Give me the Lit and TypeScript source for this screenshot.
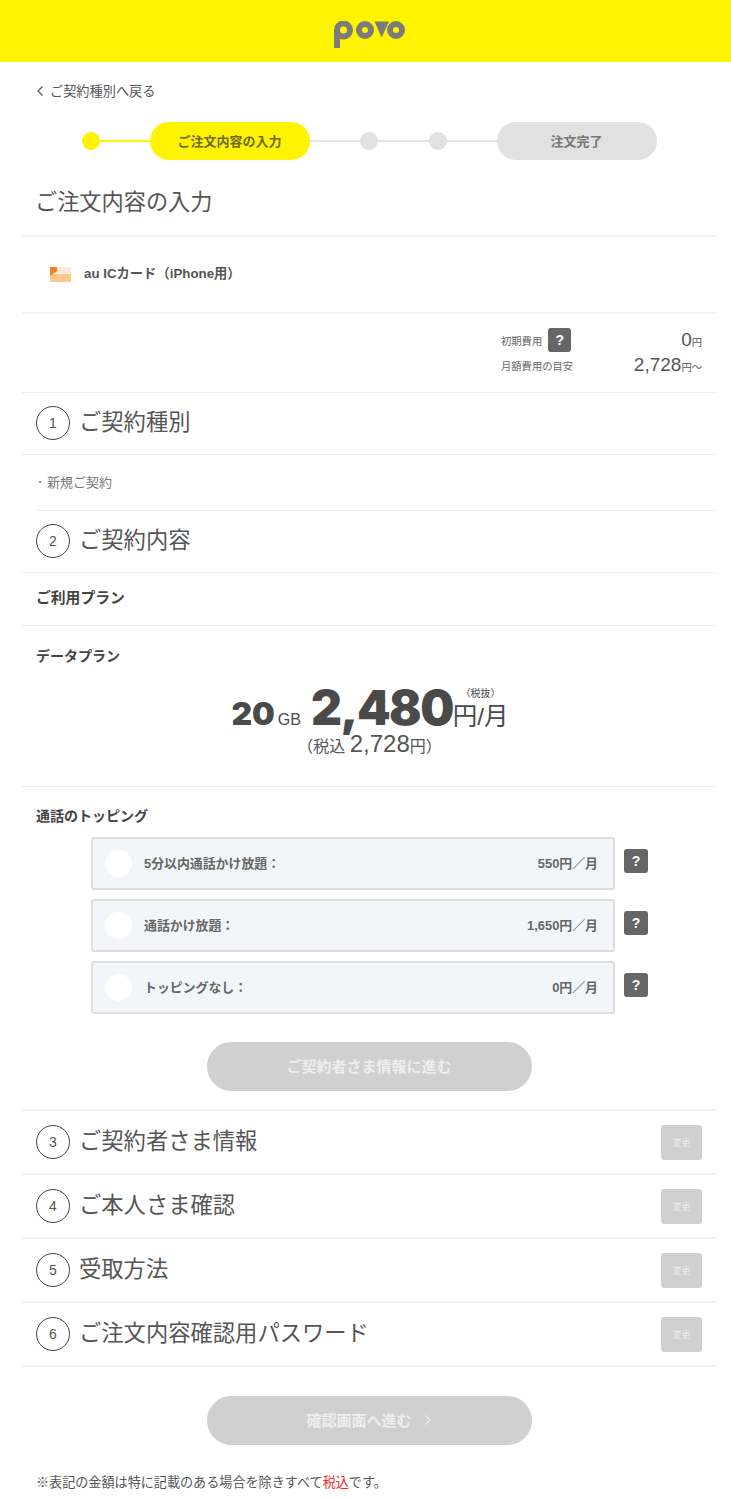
import { LitElement, html, css } from 'lit';
import { customElement } from 'lit/decorators.js';

const TOPPINGS = [
  { label: '5分以内通話かけ放題：', price: '550円／月' },
  { label: '通話かけ放題：', price: '1,650円／月' },
  { label: 'トッピングなし：', price: '0円／月' },
];

const LATER_STEPS = [
  { no: 3, title: 'ご契約者さま情報' },
  { no: 4, title: 'ご本人さま確認' },
  { no: 5, title: '受取方法' },
  { no: 6, title: 'ご注文内容確認用パスワード' },
];

@customElement('app-root')
export class AppRoot extends LitElement {
  static styles = css`
    :host {
      display: block;
      width: 731px;
      height: 1500px;
      overflow: hidden;
      background: #fff;
      color: #4a4a4a;
      font-family: 'Liberation Sans', 'Noto Sans CJK JP', sans-serif;
    }
    .header {
      height: 62px;
      background: #fff300;
      display: flex;
      justify-content: center;
      align-items: flex-start;
      padding-left: 8px;
    }
    .logo {
      display: block;
      margin-top: 21px;
    }
    .main {
      margin: 0 14px 0 22px;
    }
    .back {
      height: 60px;
      box-sizing: border-box;
      padding: 0 0 3px 14px;
      display: flex;
      align-items: center;
      gap: 6px;
      font-size: 13.2px;
      color: #555;
    }
    .stepper {
      height: 38px;
      padding-left: 60px;
      display: flex;
      align-items: center;
    }
    .dot {
      width: 18px;
      height: 18px;
      border-radius: 50%;
      background: #e1e1e1;
    }
    .dot.on {
      background: #fff300;
    }
    .line {
      height: 2px;
      background: #e4e4e4;
    }
    .line.on {
      background: #fff300;
    }
    .pill {
      width: 160px;
      height: 38px;
      box-sizing: border-box;
      padding: 0 1px 2px 0;
      border-radius: 19px;
      background: #e1e1e1;
      display: flex;
      align-items: center;
      justify-content: center;
      font-size: 13px;
      font-weight: 700;
      color: #777;
    }
    .pill.on {
      background: #fff300;
      color: #6f6a20;
    }
    .page-title {
      height: 77px;
      box-sizing: border-box;
      padding: 27px 0 0 13px;
      margin: 0;
      font-size: 22.2px;
      line-height: 32px;
      font-weight: 400;
      color: #555;
      border-bottom: 2px solid #f4f4f4;
    }
    .card {
      height: 75px;
      padding-left: 28px;
      display: flex;
      align-items: center;
      gap: 13px;
      font-size: 13.3px;
      font-weight: 700;
      color: #555;
      border-bottom: 2px solid #f4f4f4;
    }
    .card span {
      padding-bottom: 4px;
    }
    .fees {
      height: 79px;
      box-sizing: border-box;
      padding: 14px 15px 0 479px;
      border-bottom: 1px solid #ececec;
      font-size: 10.3px;
      color: #666;
    }
    .fee {
      height: 24px;
      margin-bottom: 1px;
      display: flex;
      align-items: center;
    }
    .fee .amount {
      margin-left: auto;
      color: #555;
      white-space: nowrap;
    }
    .fee b {
      font-weight: 400;
      font-size: 19px;
    }
    .help {
      width: 24px;
      height: 24px;
      border-radius: 3px;
      background: #666;
      color: #fff;
      font-size: 14px;
      font-weight: 700;
      display: flex;
      align-items: center;
      justify-content: center;
      flex: none;
    }
    .fee .help {
      width: 23px;
      margin-left: 6px;
    }
    .section {
      height: 62px;
      box-sizing: border-box;
      padding: 0 15px 2px 14px;
      display: flex;
      align-items: center;
      gap: 9px;
      font-size: 22.3px;
      color: #555;
      border-bottom: 1px solid #ececec;
    }
    .section .label {
      padding-bottom: 5px;
    }
    .section.tall {
      height: 64px;
      padding-bottom: 0;
      border-bottom: 2px solid #f4f4f4;
    }
    .section.tall .label {
      padding-bottom: 7px;
    }
    .num {
      width: 34px;
      height: 34px;
      box-sizing: border-box;
      border: 1px solid #444;
      border-radius: 50%;
      display: flex;
      align-items: center;
      justify-content: center;
      font-size: 14px;
      flex: none;
    }
    .change {
      margin-left: auto;
      width: 41px;
      height: 35px;
      border-radius: 3px;
      background: #d0d0d0;
      color: #eee;
      font-size: 9px;
      display: flex;
      align-items: center;
      justify-content: center;
    }
    .plain {
      height: 56px;
      box-sizing: border-box;
      margin-left: 14px;
      padding-bottom: 2px;
      display: flex;
      align-items: center;
      font-size: 13px;
      color: #777;
      border-bottom: 1px solid #ececec;
    }
    .bullet {
      width: 11px;
      margin-left: -1px;
      font-size: 10px;
      margin-right: 1px;
    }
    .sub {
      height: 53px;
      box-sizing: border-box;
      padding: 0 0 5px 14px;
      display: flex;
      align-items: center;
      font-size: 14.8px;
      font-weight: 700;
      color: #444;
      border-bottom: 1px solid #ececec;
    }
    .plan {
      height: 161px;
      box-sizing: border-box;
      padding-top: 20px;
      border-bottom: 1px solid #ececec;
    }
    .plan h3,
    .topping h3 {
      margin: 0;
      padding-left: 14px;
      font-size: 14px;
      line-height: 20px;
      font-weight: 700;
      color: #444;
    }
    .price {
      height: 66px;
      box-sizing: border-box;
      padding: 19px 0 0 1px;
      display: flex;
      align-items: baseline;
      justify-content: center;
      color: #4a4a4a;
      white-space: nowrap;
    }
    .price .gb {
      font-family: Inter, 'Liberation Sans', sans-serif;
      font-size: 32px;
      line-height: 40px;
      font-weight: 900;
    }
    .price .gb small {
      font-family: 'Liberation Sans', sans-serif;
      font-size: 16px;
      font-weight: 400;
      margin-left: 3px;
    }
    .price .big {
      font-family: Inter, 'Liberation Sans', sans-serif;
      font-size: 48px;
      line-height: 46px;
      font-weight: 900;
      letter-spacing: -1.5px;
      margin-left: 10px;
    }
    .price .unit {
      position: relative;
      font-size: 24.5px;
      line-height: 30px;
    }
    .price .note {
      position: absolute;
      top: -14px;
      right: 8px;
      font-size: 10px;
      line-height: 12px;
    }
    .tax {
      text-align: center;
      font-size: 16px;
      line-height: 24px;
      color: #555;
    }
    .tax span {
      font-size: 24px;
    }
    .tax small {
      font-size: 16px;
    }
    .topping {
      padding-top: 19px;
    }
    .options {
      margin: 11px 0 0 69px;
      display: flex;
      flex-direction: column;
      gap: 9px;
    }
    .row {
      display: flex;
      align-items: flex-start;
      gap: 9px;
    }
    .row .help {
      margin-top: 12px;
    }
    .option {
      width: 524px;
      height: 53px;
      box-sizing: border-box;
      border: 2px solid #dedede;
      border-radius: 3px;
      background: #f2f6fa;
      padding: 0 15px 0 12px;
      display: flex;
      align-items: center;
      font-size: 12.9px;
      font-weight: 700;
      color: #666;
    }
    .option .text {
      padding-bottom: 3px;
    }
    .radio {
      width: 27px;
      height: 27px;
      border-radius: 50%;
      background: #fff;
      margin-right: 12px;
    }
    .option .cost {
      margin-left: auto;
    }
    .cta {
      width: 325px;
      height: 49px;
      box-sizing: border-box;
      padding: 0 1px 2px 0;
      border-radius: 25px;
      background: #d0d0d0;
      color: #eee;
      font-size: 15px;
      font-weight: 700;
      display: flex;
      align-items: center;
      justify-content: center;
      gap: 12px;
    }
    .cta-wrap {
      padding: 28px 0 18px 185px;
      border-bottom: 2px solid #f4f4f4;
    }
    .cta-wrap.last {
      padding: 29px 0 0 185px;
      border-bottom: 0;
    }
    .note-line {
      margin: 29px 0 0 14px;
      font-size: 13.1px;
      line-height: 18px;
      color: #555;
    }
    .note-line em {
      font-style: normal;
      color: #f02b2b;
    }
  `;

  render() {
    return html`
      <header class="header">
        <svg class="logo" width="72" height="28" viewBox="0 0 72 28" aria-label="povo">
          <g fill="none" stroke="#7b7b7b" stroke-width="6">
            <circle cx="9.5" cy="9" r="6.5"></circle>
            <circle cx="31" cy="9" r="6"></circle>
            <circle cx="62" cy="9" r="6"></circle>
          </g>
          <rect x="0" y="8" width="6" height="19" fill="#7b7b7b"></rect>
          <path d="M40.5 0.5h14.5L47.7 16.5z" fill="#7b7b7b"></path>
        </svg>
      </header>
      <main class="main">
        <div class="back">
          <svg width="8" height="12" viewBox="0 0 8 12">
            <path d="M6.5 1.5 2 6l4.5 4.5" fill="none" stroke="#555" stroke-width="1.2"></path>
          </svg>
          <span>ご契約種別へ戻る</span>
        </div>
        <div class="stepper">
          <div class="dot on"></div>
          <div class="line on" style="width:50px"></div>
          <div class="pill on">ご注文内容の入力</div>
          <div class="line" style="width:50px"></div>
          <div class="dot"></div>
          <div class="line" style="width:51px"></div>
          <div class="dot"></div>
          <div class="line" style="width:50px"></div>
          <div class="pill">注文完了</div>
        </div>
        <h1 class="page-title">ご注文内容の入力</h1>
        <div class="card">
          <svg width="21" height="15" viewBox="0 0 21 15">
            <rect width="21" height="15" fill="#fde9d6"></rect>
            <rect y="7" width="21" height="8" fill="#fdc78e"></rect>
            <path d="M0 0h7v4L0 9z" fill="#f7801e"></path>
          </svg>
          <span>au ICカード（iPhone用）</span>
        </div>
        <div class="fees">
          <div class="fee">
            <span>初期費用</span>
            <span class="help">?</span>
            <span class="amount"><b>0</b>円</span>
          </div>
          <div class="fee">
            <span>月額費用の目安</span>
            <span class="amount"><b>2,728</b>円～</span>
          </div>
        </div>
        <div class="section"><span class="num">1</span><span class="label">ご契約種別</span></div>
        <div class="plain"><span class="bullet">・</span>新規ご契約</div>
        <div class="section"><span class="num">2</span><span class="label">ご契約内容</span></div>
        <div class="sub">ご利用プラン</div>
        <div class="plan">
          <h3>データプラン</h3>
          <div class="price">
            <span class="gb">20<small>GB</small></span>
            <span class="big">2,480</span>
            <span class="unit">円/月<span class="note">（税抜）</span></span>
          </div>
          <div class="tax">（税込 <span>2,728</span><small>円）</small></div>
        </div>
        <div class="topping">
          <h3>通話のトッピング</h3>
          <div class="options">
            ${TOPPINGS.map(
              (t) => html`
                <div class="row">
                  <div class="option">
                    <span class="radio"></span>
                    <span class="text">${t.label}</span>
                    <span class="text cost">${t.price}</span>
                  </div>
                  <span class="help">?</span>
                </div>
              `
            )}
          </div>
        </div>
        <div class="cta-wrap">
          <div class="cta">ご契約者さま情報に進む</div>
        </div>
        ${LATER_STEPS.map(
          (s) => html`
            <div class="section tall">
              <span class="num">${s.no}</span><span class="label">${s.title}</span>
              <span class="change">変更</span>
            </div>
          `
        )}
        <div class="cta-wrap last">
          <div class="cta">
            確認画面へ進む
            <svg width="8" height="12" viewBox="0 0 8 12">
              <path d="M1.5 1.5 6 6l-4.5 4.5" fill="none" stroke="#eee" stroke-width="1.1"></path>
            </svg>
          </div>
        </div>
        <p class="note-line">※表記の金額は特に記載のある場合を除きすべて<em>税込</em>です。</p>
      </main>
    `;
  }
}
